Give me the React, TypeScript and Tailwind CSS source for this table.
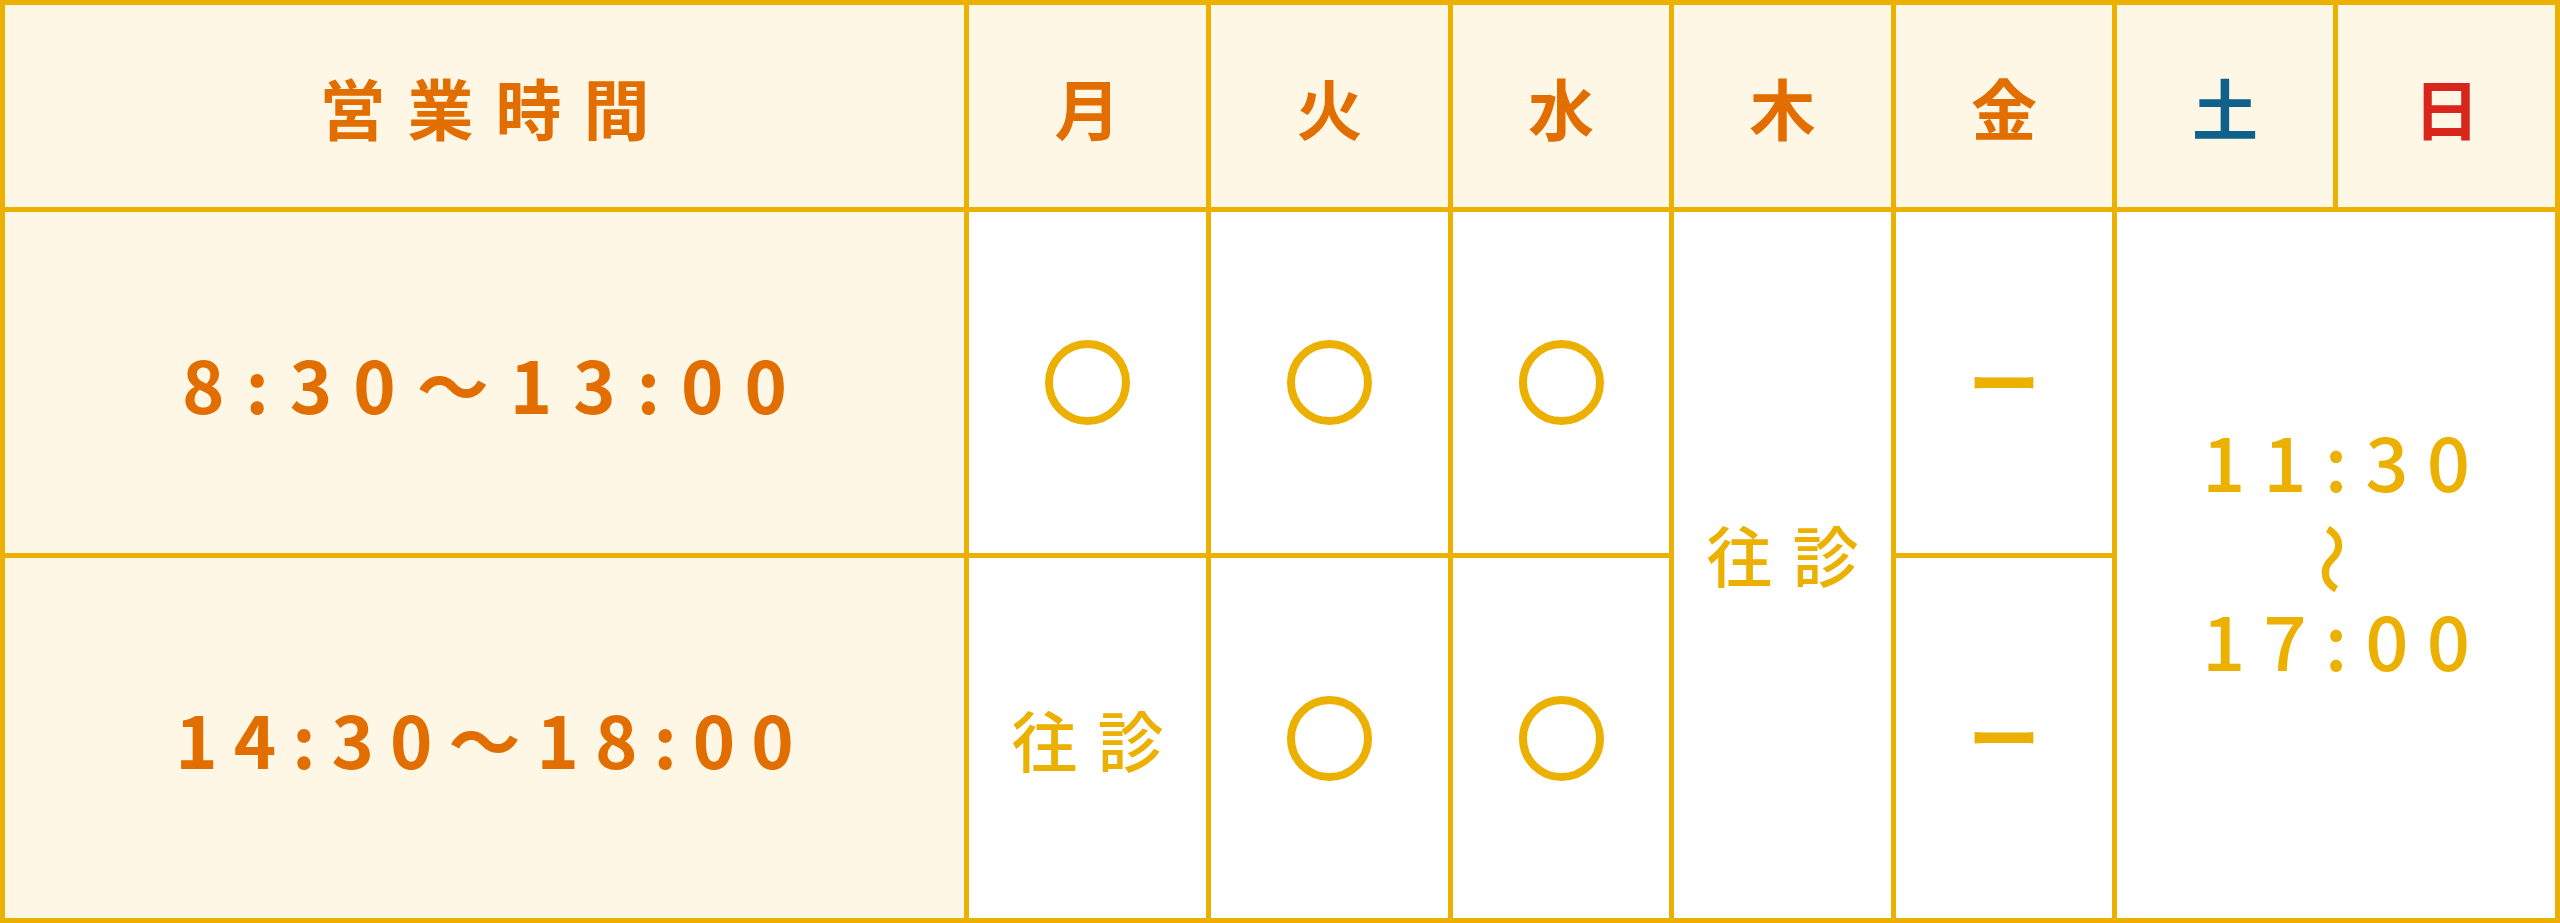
const cjk = "font-['Noto_Sans_CJK_JP',sans-serif]";

const Circle = () => (
    <span
        role="img"
        aria-label="○"
        className="block w-[85px] h-[85px] rounded-full border-[8px] border-[#ebb000]"
    />
);

const Dash = () => (
    <span className={`${cjk} text-[72px] font-bold leading-none text-[#ebb000] -mt-[8px]`}>ー</span>
);

const Oushin = () => (
    <span className={`${cjk} text-[66px] font-medium leading-none tracking-[20px] mr-[-20px] text-[#ebb000]`}>
        往診
    </span>
);

const days = [
    { d: '月', c: 'text-[#e36e00]' },
    { d: '火', c: 'text-[#e36e00]' },
    { d: '水', c: 'text-[#e36e00]' },
    { d: '木', c: 'text-[#e36e00]' },
    { d: '金', c: 'text-[#e36e00]' },
    { d: '土', c: 'text-[#10608c]' },
    { d: '日', c: 'text-[#d8261d]' },
];

const App = () => {
    return (
        <div className="w-[2560px] h-[923px] bg-[#ebb000] p-[5px] grid grid-cols-[959px_237px_237px_216px_217px_216px_216px_217px] grid-rows-[202px_341px_360px] gap-[5px]">
            {/* header */}
            <div className="bg-[#fff7e6] flex items-center justify-center">
                <span className={`${cjk} text-[66px] font-bold leading-none tracking-[22px] mr-[-22px] text-[#e36e00]`}>
                    営業時間
                </span>
            </div>
            {days.map((x) => (
                <div key={x.d} className="bg-[#fff7e6] flex items-center justify-center">
                    <span className={`${cjk} text-[66px] font-bold leading-none ${x.c}`}>{x.d}</span>
                </div>
            ))}

            {/* morning */}
            <div className="bg-[#fff7e6] flex items-center justify-center">
                <span className={`${cjk} text-[72px] font-bold leading-none tracking-[21px] mr-[-21px] text-[#e36e00]`}>
                    8:30〜13:00
                </span>
            </div>
            <div className="bg-white flex items-center justify-center">
                <Circle />
            </div>
            <div className="bg-white flex items-center justify-center">
                <Circle />
            </div>
            <div className="bg-white flex items-center justify-center">
                <Circle />
            </div>
            <div className="bg-white row-span-2 flex items-center justify-center pb-[24px]">
                <Oushin />
            </div>
            <div className="bg-white flex items-center justify-center">
                <Dash />
            </div>
            <div className="bg-white col-span-2 row-span-2 flex flex-col items-center justify-center pb-[33px]">
                <span className={`${cjk} text-[76px] font-medium leading-none tracking-[18px] mr-[-18px] text-[#ebb000]`}>
                    11:30
                </span>
                <span className={`${cjk} inline-block rotate-90 text-[72px] font-medium leading-none mt-[26px] mb-[5px] text-[#ebb000]`}>
                    〜
                </span>
                <span className={`${cjk} text-[76px] font-medium leading-none tracking-[18px] mr-[-18px] text-[#ebb000]`}>
                    17:00
                </span>
            </div>

            {/* afternoon */}
            <div className="bg-[#fff7e6] flex items-center justify-center">
                <span className={`${cjk} text-[72px] font-bold leading-none tracking-[16px] mr-[-16px] text-[#e36e00]`}>
                    14:30〜18:00
                </span>
            </div>
            <div className="bg-white flex items-center justify-center">
                <Oushin />
            </div>
            <div className="bg-white flex items-center justify-center">
                <Circle />
            </div>
            <div className="bg-white flex items-center justify-center">
                <Circle />
            </div>
            <div className="bg-white flex items-center justify-center">
                <Dash />
            </div>
        </div>
    );
};

export default App;
